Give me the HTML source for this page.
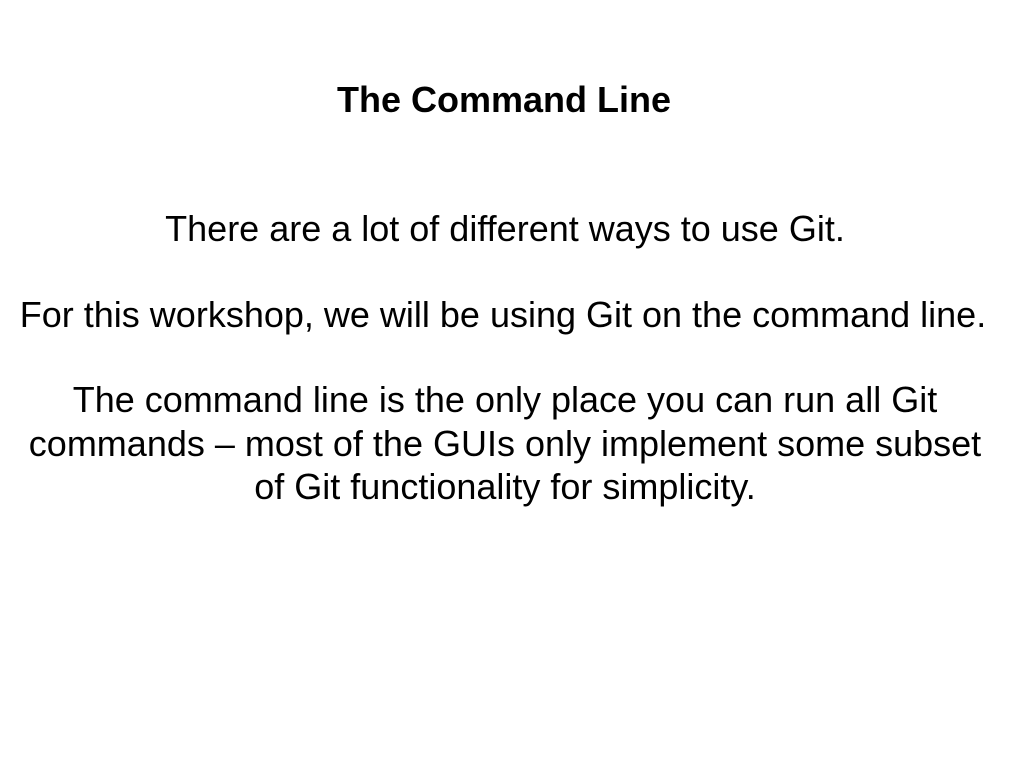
<!DOCTYPE html>
<html><head><style>
body{margin:0;width:1024px;height:768px;background:#fff;font-family:"Liberation Sans",sans-serif;color:#000;position:relative;overflow:hidden}
.t{position:absolute;left:0;width:1008px;text-align:center;top:79px;font-weight:bold;font-size:36px;line-height:42px}
.b{position:absolute;left:0;width:1010px;text-align:center;font-size:36px;line-height:43.5px;white-space:nowrap}
</style></head><body>
<div class="t">The Command Line</div>
<div class="b" style="top:207px">There are a lot of different ways to use Git.</div>
<div class="b" style="top:293px;width:1006px">For this workshop, we will be using Git on the command line.</div>
<div class="b" style="top:378px">The command line is the only place you can run all Git<br>commands – most of the GUIs only implement some subset<br>of Git functionality for simplicity.</div>
</body></html>
